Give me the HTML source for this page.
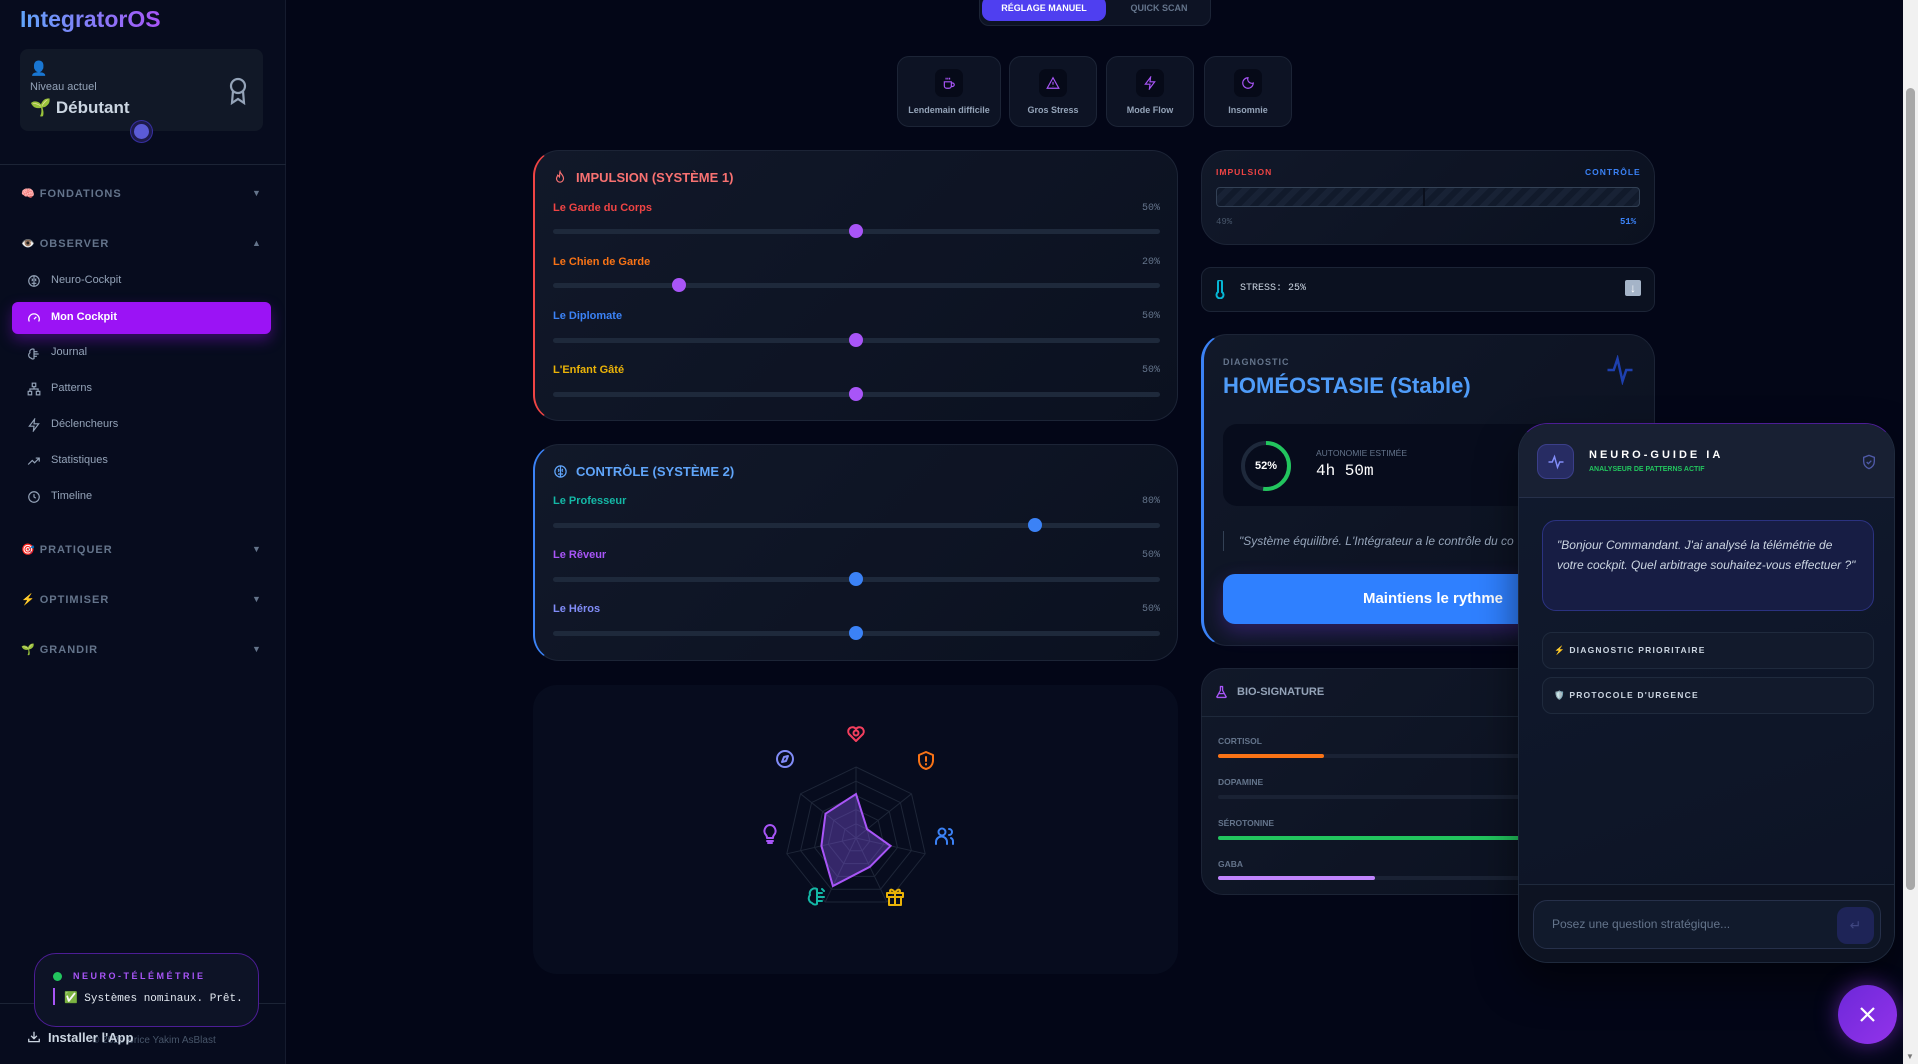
<!DOCTYPE html>
<html><head><meta charset="utf-8">
<style>
*{box-sizing:border-box;margin:0;padding:0}
body{width:1918px;height:1064px;overflow:hidden;background:#030617;font-family:"Liberation Sans",sans-serif;position:relative;color:#cbd5e1}
.a{position:absolute}
.sb{left:0;top:0;width:286px;height:1064px;background:#070c1e;border-right:1px solid #151b2e}
.logo{left:20px;top:6px;font-size:23px;font-weight:bold;background:linear-gradient(90deg,#60a5fa,#a855f7);-webkit-background-clip:text;color:transparent}
.sec{left:21px;font-size:11px;font-weight:bold;letter-spacing:1px;color:#64748b}
.chev{left:252px;font-size:9px;color:#64748b}
.nav{left:51px;font-size:11px;color:#94a3b8}
.ni{left:27px;width:14px;height:14px}
.card{background:linear-gradient(135deg,#111829,#0b1120);border:1px solid #1c2436;border-radius:26px}
.lbl{font-size:11px;font-weight:bold}
.pct{font-size:10px;color:#64748b;font-family:"Liberation Mono",monospace;text-align:right;width:60px}
.trk{height:5px;background:#1e293b;border-radius:3px;left:553px;width:607px}
.th{width:14px;height:14px;border-radius:50%;background:#a855f7}
.thb{background:#3b82f6}
.pre{top:56px;height:71px;background:#0d1324;border:1px solid #1c2436;border-radius:12px;text-align:center;font-size:9px;font-weight:bold;color:#94a3b8}
.pre .ib{width:28px;height:28px;background:#060a18;border-radius:7px;margin:12px auto 8px;display:flex;align-items:center;justify-content:center}
.bio{font-size:8.5px;font-weight:bold;color:#64748b;left:1218px}
.bt{left:1218px;width:422px;height:4px;background:#1a2234;border-radius:2px}
</style></head><body>

<div class="a sb"></div>
<div class="a logo">IntegratorOS</div>
<div class="a" style="left:20px;top:49px;width:243px;height:82px;background:#111827;border-radius:8px"></div>
<div class="a" style="left:30px;top:60px;font-size:14px">👤</div>
<div class="a" style="left:30px;top:81px;font-size:11px;color:#94a3b8">Niveau actuel</div>
<div class="a" style="left:30px;top:98px;font-size:17px;font-weight:bold;color:#cbd5e1">🌱 Débutant</div>
<svg class="a" style="left:226px;top:76px" width="24" height="30" viewBox="0 0 24 30" fill="none" stroke="#94a3b8" stroke-width="2.2"><circle cx="12" cy="10" r="7"/><path d="M7 15l-1 12 6-4 6 4-1-12"/></svg>
<div class="a" style="left:131px;top:121px;width:21px;height:21px;border-radius:50%;background:#5b5bd6;border:3px solid #1e1b4b;box-shadow:0 0 0 1px #3730a3"></div>
<div class="a" style="left:0;top:164px;width:286px;height:1px;background:#1c2436"></div>

<div class="a sec" style="top:187px">🧠 FONDATIONS</div><div class="a chev" style="top:188px">▼</div>
<div class="a sec" style="top:237px">👁️ OBSERVER</div><div class="a chev" style="top:238px">▲</div>

<div class="a" style="left:12px;top:302px;width:259px;height:32px;background:#9b13f5;border-radius:6px;box-shadow:0 6px 14px rgba(155,19,245,.35)"></div>
<svg class="a ni" style="top:274px" viewBox="0 0 24 24" fill="none" stroke="#94a3b8" stroke-width="2"><circle cx="12" cy="12" r="9"/><path d="M12 3v18M8 8c2 1 2 3 0 4M16 8c-2 1-2 3 0 4M8 16h3M13 16h3"/></svg>
<div class="a nav" style="top:274px">Neuro-Cockpit</div>
<svg class="a ni" style="top:311px" viewBox="0 0 24 24" fill="none" stroke="#fff" stroke-width="2.2"><path d="M4 18a9 9 0 1 1 16 0"/><path d="M12 14l4-4"/></svg>
<div class="a nav" style="top:311px;color:#fff;font-weight:bold">Mon Cockpit</div>
<svg class="a ni" style="top:347px" viewBox="0 0 24 24" fill="none" stroke="#94a3b8" stroke-width="2"><path d="M12 4a5 5 0 0 0-7 6 5 5 0 0 0 2 9 4 4 0 0 0 5 1V4zM12 8h6M12 12h8M12 16h5"/></svg>
<div class="a nav" style="top:346px">Journal</div>
<svg class="a ni" style="top:382px" viewBox="0 0 24 24" fill="none" stroke="#94a3b8" stroke-width="2"><rect x="9" y="2" width="6" height="6"/><rect x="2" y="16" width="6" height="6"/><rect x="16" y="16" width="6" height="6"/><path d="M5 16v-4h14v4M12 8v4"/></svg>
<div class="a nav" style="top:382px">Patterns</div>
<svg class="a ni" style="top:418px" viewBox="0 0 24 24" fill="none" stroke="#94a3b8" stroke-width="2"><path d="M13 2L4 14h8l-1 8 9-12h-8z"/></svg>
<div class="a nav" style="top:418px">Déclencheurs</div>
<svg class="a ni" style="top:454px" viewBox="0 0 24 24" fill="none" stroke="#94a3b8" stroke-width="2"><path d="M2 18l7-7 4 4 8-8M15 7h6v6"/></svg>
<div class="a nav" style="top:454px">Statistiques</div>
<svg class="a ni" style="top:490px" viewBox="0 0 24 24" fill="none" stroke="#94a3b8" stroke-width="2"><circle cx="12" cy="12" r="9"/><path d="M12 7v5l3 2"/></svg>
<div class="a nav" style="top:490px">Timeline</div>

<div class="a sec" style="top:543px">🎯 PRATIQUER</div><div class="a chev" style="top:544px">▼</div>
<div class="a sec" style="top:593px">⚡ OPTIMISER</div><div class="a chev" style="top:594px">▼</div>
<div class="a sec" style="top:643px">🌱 GRANDIR</div><div class="a chev" style="top:644px">▼</div>

<div class="a" style="left:0;top:1003px;width:286px;height:1px;background:#1c2436"></div>
<div class="a" style="left:92px;top:1035px;font-size:10px;color:#475569">© 2025 Brice Yakim AsBlast</div>
<svg class="a" style="left:27px;top:1030px" width="14" height="14" viewBox="0 0 24 24" fill="none" stroke="#cbd5e1" stroke-width="2.2"><path d="M3 15v5h18v-5M12 3v12M7 10l5 5 5-5"/></svg>
<div class="a" style="left:48px;top:1030px;font-size:13px;font-weight:bold;color:#cbd5e1">Installer l'App</div>
<div class="a" style="left:34px;top:953px;width:225px;height:74px;background:#0d1326;border:1px solid #4c1d95;border-radius:22px"></div>
<div class="a" style="left:53px;top:972px;width:9px;height:9px;border-radius:50%;background:#22c55e"></div>
<div class="a" style="left:73px;top:971px;font-size:9px;font-weight:bold;letter-spacing:2.5px;color:#a855f7">NEURO-TÉLÉMÉTRIE</div>
<div class="a" style="left:53px;top:988px;width:2px;height:17px;background:#a855f7"></div>
<div class="a" style="left:64px;top:991px;font-size:11px;font-family:'Liberation Mono',monospace;color:#e2e8f0">✅ Systèmes nominaux. Prêt.</div>

<div class="a" style="left:979px;top:-10px;width:232px;height:36px;background:#0d1324;border:1px solid #1c2436;border-radius:10px"></div>
<div class="a" style="left:982px;top:-4px;width:124px;height:25px;background:#4f3ff0;border-radius:9px;color:#fff;font-size:9px;font-weight:bold;text-align:center;padding-top:7px">RÉGLAGE MANUEL</div>
<div class="a" style="left:1110px;top:3px;width:98px;font-size:9px;font-weight:bold;color:#64748b;text-align:center">QUICK SCAN</div>

<div class="a pre" style="left:897px;width:104px"><div class="ib"><svg width="14" height="14" viewBox="0 0 24 24" fill="none" stroke="#a855f7" stroke-width="2"><path d="M4 10h12v7a4 4 0 0 1-4 4H8a4 4 0 0 1-4-4zM16 12h2a3 3 0 0 1 0 6h-2M7 3v3M10 3v3M13 3v3"/></svg></div>Lendemain difficile</div>
<div class="a pre" style="left:1009px;width:88px"><div class="ib"><svg width="14" height="14" viewBox="0 0 24 24" fill="none" stroke="#a855f7" stroke-width="2"><path d="M12 3L2 21h20zM12 10v5M12 18v.5"/></svg></div>Gros Stress</div>
<div class="a pre" style="left:1106px;width:88px"><div class="ib"><svg width="14" height="14" viewBox="0 0 24 24" fill="none" stroke="#a855f7" stroke-width="2"><path d="M13 2L4 14h8l-1 8 9-12h-8z"/></svg></div>Mode Flow</div>
<div class="a pre" style="left:1204px;width:88px"><div class="ib"><svg width="14" height="14" viewBox="0 0 24 24" fill="none" stroke="#a855f7" stroke-width="2"><path d="M12 3a7 7 0 0 0 9 9 9 9 0 1 1-9-9z"/></svg></div>Insomnie</div>

<div class="a card" style="left:533px;top:150px;width:645px;height:271px;border-left:2px solid #ef4444"></div>
<svg class="a" style="left:553px;top:170px" width="14" height="15" viewBox="0 0 24 24" fill="none" stroke="#f87171" stroke-width="2"><path d="M12 2c1 4 6 6 6 12a6 6 0 0 1-12 0c0-3 2-4 2-6 2 1 3 3 3 3 1-3 0-6 1-9z"/></svg>
<div class="a" style="left:576px;top:170px;font-size:13px;font-weight:bold;color:#f87171">IMPULSION (SYSTÈME 1)</div>
<div class="a lbl" style="left:553px;top:202px;color:#ef4444">Le Garde du Corps</div><div class="a pct" style="left:1100px;top:203px">50%</div>
<div class="a trk" style="top:229px"></div><div class="a th" style="left:849px;top:224px"></div>
<div class="a lbl" style="left:553px;top:256px;color:#f97316">Le Chien de Garde</div><div class="a pct" style="left:1100px;top:257px">20%</div>
<div class="a trk" style="top:283px"></div><div class="a th" style="left:672px;top:278px"></div>
<div class="a lbl" style="left:553px;top:310px;color:#3b82f6">Le Diplomate</div><div class="a pct" style="left:1100px;top:311px">50%</div>
<div class="a trk" style="top:338px"></div><div class="a th" style="left:849px;top:333px"></div>
<div class="a lbl" style="left:553px;top:364px;color:#eab308">L'Enfant Gâté</div><div class="a pct" style="left:1100px;top:365px">50%</div>
<div class="a trk" style="top:392px"></div><div class="a th" style="left:849px;top:387px"></div>

<div class="a card" style="left:533px;top:444px;width:645px;height:217px;border-left:2px solid #3b82f6"></div>
<svg class="a" style="left:553px;top:464px" width="15" height="15" viewBox="0 0 24 24" fill="none" stroke="#60a5fa" stroke-width="2"><circle cx="12" cy="12" r="9"/><path d="M12 3v18M8 8c2 1 2 3 0 4M16 8c-2 1-2 3 0 4M8 16h3M13 16h3"/></svg>
<div class="a" style="left:576px;top:464px;font-size:13px;font-weight:bold;color:#60a5fa">CONTRÔLE (SYSTÈME 2)</div>
<div class="a lbl" style="left:553px;top:495px;color:#14b8a6">Le Professeur</div><div class="a pct" style="left:1100px;top:496px">80%</div>
<div class="a trk" style="top:523px"></div><div class="a th thb" style="left:1028px;top:518px"></div>
<div class="a lbl" style="left:553px;top:549px;color:#a855f7">Le Rêveur</div><div class="a pct" style="left:1100px;top:550px">50%</div>
<div class="a trk" style="top:577px"></div><div class="a th thb" style="left:849px;top:572px"></div>
<div class="a lbl" style="left:553px;top:603px;color:#818cf8">Le Héros</div><div class="a pct" style="left:1100px;top:604px">50%</div>
<div class="a trk" style="top:631px"></div><div class="a th thb" style="left:849px;top:626px"></div>

<div class="a" style="left:533px;top:685px;width:645px;height:289px;background:#070c1e;border-radius:24px"></div>
<svg class="a" style="left:533px;top:685px" width="645" height="289">
<g transform="translate(323,153)" fill="none" stroke="#1e2638" stroke-width="1">
<polygon points="0,-71 55.5,-44.2 69.2,15.8 30.8,64 -30.8,64 -69.2,15.8 -55.5,-44.2"/>
<polygon points="0,-56.8 44.4,-35.4 55.4,12.6 24.6,51.2 -24.6,51.2 -55.4,12.6 -44.4,-35.4"/>
<polygon points="0,-42.6 33.3,-26.5 41.5,9.5 18.5,38.4 -18.5,38.4 -41.5,9.5 -33.3,-26.5"/>
<polygon points="0,-28.4 22.2,-17.7 27.7,6.3 12.3,25.6 -12.3,25.6 -27.7,6.3 -22.2,-17.7"/>
<polygon points="0,-14.2 11.1,-8.8 13.8,3.2 6.2,12.8 -6.2,12.8 -13.8,3.2 -11.1,-8.8"/>
<path d="M0 0L0,-71M0 0L55.5,-44.2M0 0L69.2,15.8M0 0L30.8,64M0 0L-30.8,64M0 0L-69.2,15.8M0 0L-55.5,-44.2"/>
<polygon points="0,-44 11.1,-8.8 34.6,7.9 13.9,28.8 -23.1,48 -34.6,7.9 -30.5,-24.3" fill="rgba(139,92,246,.35)" stroke="#a855f7" stroke-width="2"/>
</g>
<g fill="none" stroke-width="2" stroke-linecap="round" stroke-linejoin="round">
<g transform="translate(314,39)" stroke="#f43f5e"><path d="M9 17l-7-7a4 4 0 0 1 7-5 4 4 0 0 1 7 5z"/><circle cx="9" cy="9" r="2.5"/></g>
<g transform="translate(385,66)" stroke="#f97316"><path d="M8 1l7 3v5c0 5-3 8-7 9-4-1-7-4-7-9V4z"/><path d="M8 6v4M8 13v.5"/></g>
<g transform="translate(402,142)" stroke="#3b82f6"><circle cx="7" cy="5" r="3.5"/><path d="M1 17v-2a5 5 0 0 1 11 0v2M14 2a3 3 0 0 1 0 6M16 11a4 4 0 0 1 2 4v2"/></g>
<g transform="translate(353,202)" stroke="#eab308"><rect x="1" y="6" width="16" height="4"/><path d="M3 10v8h12v-8M9 6v12M9 6C7 2 4 2 4 4s3 2 5 2c2 0 5 0 5-2s-3-2-5 2"/></g>
<g transform="translate(275,202)" stroke="#14b8a6"><path d="M9 2a5 5 0 0 0-7 6 5 5 0 0 0 2 8 4 4 0 0 0 5 1V2zM9 6h5M9 10h7M9 14h5M14 2l2 2"/></g>
<g transform="translate(229,139)" stroke="#a855f7"><path d="M8 1a6 6 0 0 0-4 10c1 1 1 2 1 3h6c0-1 0-2 1-3A6 6 0 0 0 8 1zM5 17h6M6 19h4"/></g>
<g transform="translate(243,65)" stroke="#818cf8"><circle cx="9" cy="9" r="8"/><path d="M12 6l-2 5-4 1 2-5z"/></g>
</g>
</svg>

<div class="a card" style="left:1201px;top:150px;width:454px;height:95px"></div>
<div class="a" style="left:1216px;top:167px;font-size:8.5px;font-weight:bold;letter-spacing:1px;color:#ef4444">IMPULSION</div>
<div class="a" style="left:1585px;top:167px;font-size:8.5px;font-weight:bold;letter-spacing:1px;color:#3b82f6">CONTRÔLE</div>
<div class="a" style="left:1216px;top:187px;width:424px;height:20px;border:1px solid #334155;border-radius:4px;background:repeating-linear-gradient(135deg,#111a2b 0 6px,#182235 6px 12px)"></div>
<div class="a" style="left:1423px;top:188px;width:2px;height:18px;background:#0a0f1c"></div>
<div class="a" style="left:1216px;top:217px;font-size:9px;color:#475569;font-family:'Liberation Mono',monospace">49%</div>
<div class="a" style="left:1620px;top:217px;font-size:9px;font-weight:bold;color:#3b82f6;font-family:'Liberation Mono',monospace">51%</div>

<div class="a" style="left:1201px;top:267px;width:454px;height:45px;background:#0b1120;border:1px solid #1c2436;border-radius:10px"></div>
<svg class="a" style="left:1213px;top:280px" width="14" height="19" viewBox="0 0 14 19" fill="none" stroke="#06b6d4" stroke-width="2"><path d="M5 2a2 2 0 0 1 4 0v10a3.5 3.5 0 1 1-4 0z"/></svg>
<div class="a" style="left:1240px;top:283px;font-size:10px;font-family:'Liberation Mono',monospace;color:#cbd5e1">STRESS: 25%</div>
<div class="a" style="left:1625px;top:280px;width:16px;height:16px;background:#a5b4c8;border-radius:2px;color:#fff;font-size:12px;text-align:center;line-height:16px;font-weight:bold">↓</div>

<div class="a card" style="left:1201px;top:334px;width:454px;height:312px;border-left:3px solid #3b82f6"></div>
<div class="a" style="left:1223px;top:357px;font-size:9px;font-weight:bold;letter-spacing:1px;color:#64748b">DIAGNOSTIC</div>
<div class="a" style="left:1223px;top:373px;font-size:22px;font-weight:bold;color:#4f9cf9">HOMÉOSTASIE (Stable)</div>
<svg class="a" style="left:1605px;top:355px" width="30" height="30" viewBox="0 0 24 24" fill="none" stroke="#1e40af" stroke-width="2"><path d="M2 12h5l3-9 4 18 3-9h5"/></svg>
<div class="a" style="left:1223px;top:424px;width:420px;height:82px;background:#070c1c;border-radius:14px"></div>
<svg class="a" style="left:1240px;top:440px" width="52" height="52" viewBox="0 0 52 52"><circle cx="26" cy="26" r="23" fill="none" stroke="#1e293b" stroke-width="4"/><circle cx="26" cy="26" r="23" fill="none" stroke="#22c55e" stroke-width="4" stroke-dasharray="75 145" transform="rotate(-90 26 26)"/></svg>
<div class="a" style="left:1250px;top:460px;width:32px;text-align:center;font-size:11px;font-weight:bold;color:#fff">52%</div>
<div class="a" style="left:1316px;top:448px;font-size:8.5px;color:#64748b">AUTONOMIE ESTIMÉE</div>
<div class="a" style="left:1316px;top:462px;font-size:16px;font-family:'Liberation Mono',monospace;color:#fff">4h 50m</div>
<div class="a" style="left:1223px;top:531px;width:1px;height:20px;background:#334155"></div>
<div class="a" style="left:1239px;top:534px;font-size:12px;font-style:italic;color:#94a3b8;white-space:nowrap">"Système équilibré. L'Intégrateur a le contrôle du co</div>
<div class="a" style="left:1223px;top:574px;width:420px;height:50px;background:#2f80ff;border-radius:12px;color:#fff;font-size:15px;font-weight:bold;text-align:center;line-height:50px;box-shadow:0 8px 20px rgba(124,58,237,.3)">Maintiens le rythme</div>

<div class="a card" style="left:1201px;top:668px;width:454px;height:227px;border-radius:22px"></div>
<div class="a" style="left:1201px;top:716px;width:454px;height:1px;background:#1e293b"></div>
<svg class="a" style="left:1215px;top:684px" width="13" height="16" viewBox="0 0 24 24" fill="none" stroke="#a855f7" stroke-width="2.4"><path d="M9 2h6M10 2v7L4 20a1 1 0 0 0 1 2h14a1 1 0 0 0 1-2L14 9V2M7 15h10"/></svg>
<div class="a" style="left:1237px;top:686px;font-size:11px;font-weight:bold;color:#94a3b8">BIO-SIGNATURE</div>
<div class="a bio" style="top:736px">CORTISOL</div><div class="a bt" style="top:754px"><div style="width:106px;height:4px;background:#f97316;border-radius:2px"></div></div>
<div class="a bio" style="top:777px">DOPAMINE</div><div class="a bt" style="top:795px"></div>
<div class="a bio" style="top:818px">SÉROTONINE</div><div class="a bt" style="top:836px"><div style="width:380px;height:4px;background:#22c55e;border-radius:2px"></div></div>
<div class="a bio" style="top:859px">GABA</div><div class="a bt" style="top:876px"><div style="width:157px;height:4px;background:#c084fc;border-radius:2px"></div></div>

<div class="a" style="left:1518px;top:423px;width:377px;height:540px;background:linear-gradient(160deg,#111a2e,#0c1324);border:1px solid #1f2a3d;border-top-color:#4c1d95;border-radius:30px;overflow:hidden;box-shadow:0 20px 40px rgba(0,0,0,.5)">
 <div style="position:absolute;left:0;top:0;width:377px;height:74px;background:#182033;border-bottom:1px solid #26304a"></div>
 <div style="position:absolute;left:18px;top:20px;width:37px;height:35px;background:#272c63;border:1px solid #3b3f8a;border-radius:10px;display:flex;align-items:center;justify-content:center"><svg width="18" height="18" viewBox="0 0 24 24" fill="none" stroke="#818cf8" stroke-width="2"><path d="M2 12h5l3-7 4 14 3-7h5"/></svg></div>
 <div style="position:absolute;left:70px;top:25px;font-size:11px;font-weight:bold;letter-spacing:3px;color:#fff">NEURO-GUIDE IA</div>
 <div style="position:absolute;left:70px;top:42px;font-size:7px;font-weight:bold;color:#22c55e">ANALYSEUR DE PATTERNS ACTIF</div>
 <svg style="position:absolute;left:342px;top:29px" width="16" height="18" viewBox="0 0 24 24" fill="none" stroke="#4f5aa8" stroke-width="2"><path d="M12 2l8 3v6c0 5-3.5 9-8 11-4.5-2-8-6-8-11V5z"/><path d="M8.5 12l2.5 2.5 4.5-4.5"/></svg>
 <div style="position:absolute;left:23px;top:96px;width:332px;height:91px;background:#171d44;border:1px solid #2b3280;border-radius:14px;padding:14px 14px;font-size:12px;font-style:italic;color:#cbd5e1;line-height:20px">"Bonjour Commandant. J'ai analysé la télémétrie de votre cockpit. Quel arbitrage souhaitez-vous effectuer ?"</div>
 <div style="position:absolute;left:23px;top:208px;width:332px;height:37px;background:#121a2c;border:1px solid #1f2a3d;border-radius:10px;padding:12px 11px;font-size:8.5px;font-weight:bold;letter-spacing:1.2px;color:#cbd5e1">⚡ DIAGNOSTIC PRIORITAIRE</div>
 <div style="position:absolute;left:23px;top:253px;width:332px;height:37px;background:#121a2c;border:1px solid #1f2a3d;border-radius:10px;padding:12px 11px;font-size:8.5px;font-weight:bold;letter-spacing:1.2px;color:#cbd5e1">🛡️ PROTOCOLE D'URGENCE</div>
 <div style="position:absolute;left:0;top:460px;width:377px;height:80px;background:#0d1322;border-top:1px solid #1f2a3d"></div>
 <div style="position:absolute;left:14px;top:476px;width:348px;height:49px;background:#111a2c;border:1px solid #26304a;border-radius:14px;padding:16px 18px;font-size:12px;color:#64748b">Posez une question stratégique...</div>
 <div style="position:absolute;left:318px;top:483px;width:37px;height:37px;background:#1e2457;border-radius:10px;color:#3f4680;text-align:center;line-height:37px;font-size:14px">↵</div>
</div>

<div class="a" style="left:1838px;top:985px;width:59px;height:59px;border-radius:50%;background:linear-gradient(135deg,#6d28d9,#9333ea);box-shadow:0 0 22px rgba(147,51,234,.55)"></div>
<svg class="a" style="left:1858px;top:1005px" width="19" height="19" viewBox="0 0 19 19" stroke="#fff" stroke-width="2.2"><path d="M3 3l13 13M16 3L3 16"/></svg>

<div class="a" style="left:1903px;top:0;width:15px;height:1064px;background:#f1f1f1"></div>
<div class="a" style="left:1906px;top:88px;width:9px;height:802px;background:#a8a8a8;border-radius:5px"></div>
<div class="a" style="left:1906px;top:1052px;font-size:8px;color:#777">▼</div>
</body></html>
